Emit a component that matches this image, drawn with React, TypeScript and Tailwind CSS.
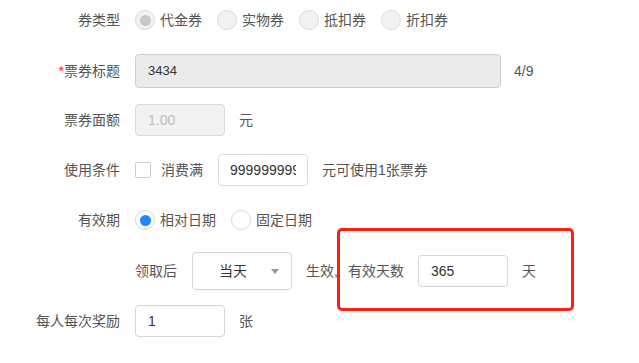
import React from "react";

const font = { fontFamily: '"Liberation Sans", "Noto Sans CJK SC", sans-serif' };

function Radio({ checked, disabled, label }: { checked?: boolean; disabled?: boolean; label: string }) {
  return (
    <div className="flex items-center mr-[15px]">
      <span
        className={
          "w-[20px] h-[20px] rounded-full border flex items-center justify-center " +
          (disabled ? "border-[#d9d9d9] bg-[#f2f2f2]" : "border-[#d9d9d9] bg-white")
        }
      >
        {checked && (
          <span
            className={
              "w-[11px] h-[11px] rounded-full " + (disabled ? "bg-[#c8c8c8]" : "bg-[#1e88fb]")
            }
          />
        )}
      </span>
      <span className="ml-[5px] text-[14px] text-[#555]">{label}</span>
    </div>
  );
}

function Label({ children }: { children: React.ReactNode }) {
  return (
    <div className="w-[135px] shrink-0 pr-[15px] text-right text-[14px] text-[#555]">{children}</div>
  );
}

export default function App() {
  return (
    <div className="w-[639px] h-[363px] bg-white overflow-hidden relative" style={font}>
      {/* Row 1 */}
      <div className="h-[40px] flex items-center">
        <Label>券类型</Label>
        <Radio checked disabled label="代金券" />
        <Radio disabled label="实物券" />
        <Radio disabled label="抵扣券" />
        <Radio disabled label="折扣券" />
      </div>
      {/* Row 2 */}
      <div className="h-[62px] flex items-center">
        <Label>
          <span className="text-[#f5222d]">*</span>票券标题
        </Label>
        <div className="w-[366px] h-[34px] rounded-[4px] border border-[#cfcfcf] bg-[#ebebeb] flex items-center pl-[12px] text-[13px] text-[#333]">
          3434
        </div>
        <span className="ml-[13px] text-[14px] text-[#555]">4/9</span>
      </div>
      {/* Row 3 */}
      <div className="h-[36px] flex items-center">
        <Label>票券面额</Label>
        <div className="w-[90px] h-[32px] rounded-[4px] border border-[#dcdcdc] bg-[#f2f2f2] flex items-center pl-[12px] text-[14px] text-[#bbb]">
          1.00
        </div>
        <span className="ml-[14px] text-[14px] text-[#555]">元</span>
      </div>
      {/* Row 4 */}
      <div className="h-[64px] flex items-center">
        <Label>使用条件</Label>
        <span className="w-[16px] h-[16px] rounded-[2px] border border-[#cccccc] bg-white" />
        <span className="ml-[10px] text-[14px] text-[#555]">消费满</span>
        <input
          readOnly
          value="999999999"
          className="ml-[15px] w-[90px] h-[32px] rounded-[4px] border border-[#dcdcdc] bg-white px-[11px] text-[14px] text-[#333] outline-none"
          style={font}
        />
        <span className="ml-[14px] text-[14px] text-[#555]">元可使用1张票券</span>
      </div>
      {/* Row 5 */}
      <div className="h-[36px] flex items-center">
        <Label>有效期</Label>
        <Radio checked label="相对日期" />
        <Radio label="固定日期" />
      </div>
      {/* Row 6 */}
      <div className="h-[66px] flex items-center">
        <div className="w-[135px] shrink-0" />
        <span className="text-[14px] text-[#555]">领取后</span>
        <div className="ml-[15px] w-[100px] h-[38px] rounded-[4px] border border-[#d4d4d4] bg-white flex items-center justify-between pl-[26px] pr-[12px]">
          <span className="text-[14px] text-[#333]">当天</span>
          <span className="w-0 h-0 border-l-[4px] border-r-[4px] border-t-[5px] border-l-transparent border-r-transparent border-t-[#999]" />
        </div>
        <span className="ml-[14px] text-[14px] text-[#555]">生效,</span>
        <div className="relative flex items-center ml-[10px]">
          <div className="absolute left-[-11px] top-[-27px] w-[237px] h-[83px] rounded-[5px] border-[3px] border-[#ff1f0f] pointer-events-none" />
          <span className="text-[14px] text-[#555]">有效天数</span>
          <div className="ml-[14px] w-[90px] h-[32px] rounded-[4px] border border-[#d4d4d4] bg-white flex items-center pl-[12px] text-[14px] text-[#333]">
            365
          </div>
          <span className="ml-[14px] text-[14px] text-[#555]">天</span>
        </div>
      </div>
      {/* Row 7 */}
      <div className="h-[34px] flex items-center">
        <Label>每人每次奖励</Label>
        <div className="w-[90px] h-[32px] rounded-[4px] border border-[#d4d4d4] bg-white flex items-center pl-[12px] text-[14px] text-[#333]">
          1
        </div>
        <span className="ml-[14px] text-[14px] text-[#555]">张</span>
      </div>
    </div>
  );
}
